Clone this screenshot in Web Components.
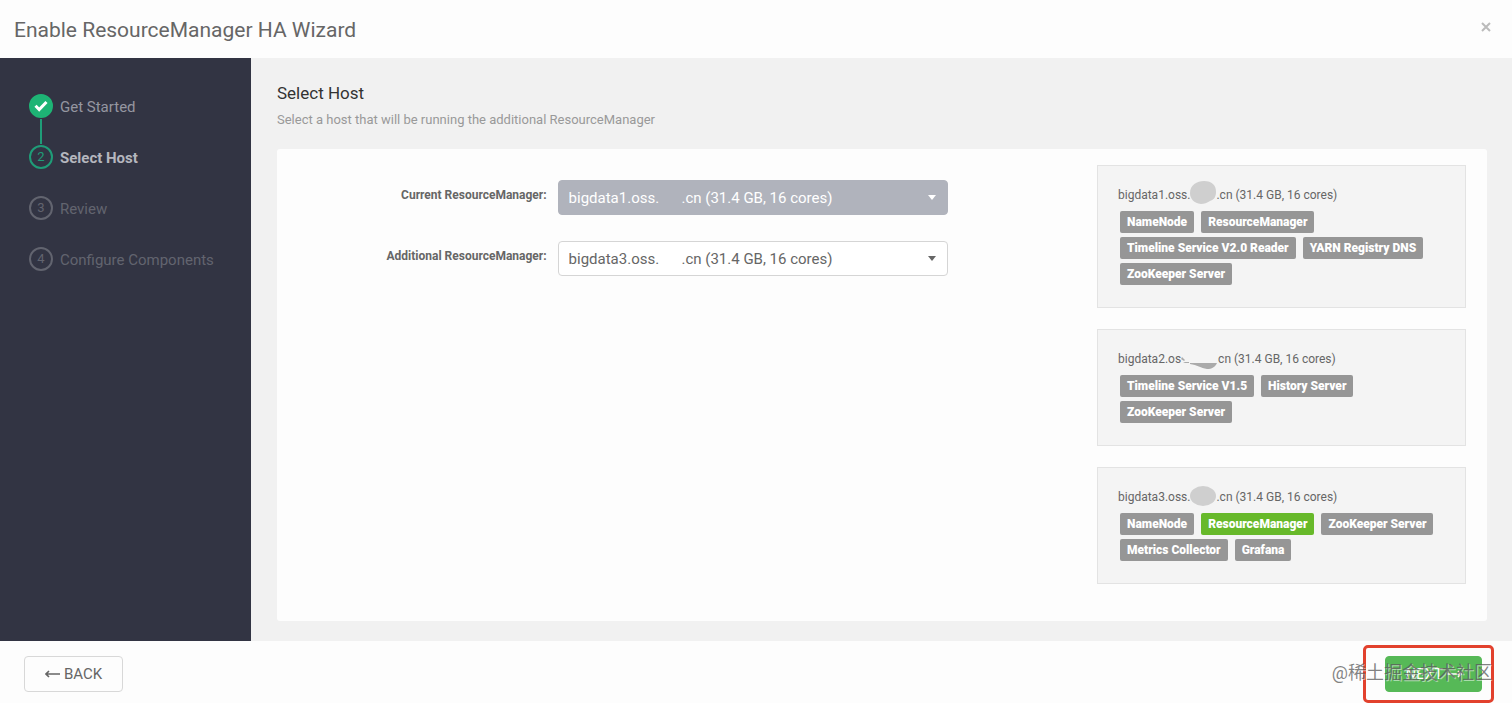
<!DOCTYPE html>
<html lang="en">
<head>
<meta charset="utf-8">
<title>Enable ResourceManager HA Wizard</title>
<style>
    body {
        margin: 0;
        font-family: Roboto, "Noto Sans CJK SC", sans-serif;
        font-size: 15px;
        color: #666;
        background: #fdfdfd;
    }
</style>
</head>
<body>
<ha-wizard>
    <wizard-header slot="header">Enable ResourceManager HA Wizard</wizard-header>

    <wizard-nav slot="nav">
        <wizard-step number="1" state="done">Get Started</wizard-step>
        <wizard-step number="2" state="active">Select Host</wizard-step>
        <wizard-step number="3">Review</wizard-step>
        <wizard-step number="4">Configure Components</wizard-step>
    </wizard-nav>

    <host-select label="Current ResourceManager:" host="bigdata1.oss." slot="form" disabled></host-select>
    <host-select label="Additional ResourceManager:" host="bigdata3.oss." slot="form"></host-select>

    <host-card name="bigdata1.oss." domain=".cn" mask="tall" slot="hosts">
        <service-tag>NameNode</service-tag>
        <service-tag>ResourceManager</service-tag>
        <service-tag>Timeline Service V2.0 Reader</service-tag>
        <service-tag>YARN Registry DNS</service-tag>
        <service-tag>ZooKeeper Server</service-tag>
    </host-card>
    <host-card name="bigdata2.os" domain="cn" mask="flat" slot="hosts">
        <service-tag>Timeline Service V1.5</service-tag>
        <service-tag>History Server</service-tag>
        <service-tag>ZooKeeper Server</service-tag>
    </host-card>
    <host-card name="bigdata3.oss." domain=".cn" mask="round" slot="hosts">
        <service-tag>NameNode</service-tag>
        <service-tag added>ResourceManager</service-tag>
        <service-tag>ZooKeeper Server</service-tag>
        <service-tag>Metrics Collector</service-tag>
        <service-tag>Grafana</service-tag>
    </host-card>

    <wizard-footer slot="footer"></wizard-footer>
</ha-wizard>

<script>
class HaWizard extends HTMLElement {

    constructor() {
        super();
        this.shadowDOM = this.attachShadow({mode: "open"});
    }

    connectedCallback() {
        this.shadowDOM.innerHTML = `
        <style>
        * {
            box-sizing: border-box;
        }
        :host {
            display: flex;
            flex-direction: column;
            min-height: 100vh;
        }
        .body {
            display: flex;
            flex: 1;
        }
        nav {
            width: 251px;
            flex-shrink: 0;
            background: #323443;
        }
        main {
            flex: 1;
            display: flex;
            flex-direction: column;
            padding: 24px 25px 20px 26px;
            background: #f1f1f1;
        }
        h2 {
            margin: 0;
            font-size: 17px;
            line-height: 22px;
            font-weight: normal;
            color: #333;
        }
        p {
            margin: 6px 0 19px;
            font-size: 13px;
            line-height: 20px;
            color: #999;
        }
        .panel {
            flex: 1;
            display: flex;
            gap: 20px;
            padding: 16px 21px 36px 20px;
            background: #fdfdfd;
            border-radius: 3px;
        }
        form {
            flex: 1;
            display: flex;
            flex-direction: column;
            gap: 26px;
            padding-top: 15px;
        }
        .hosts {
            width: 369px;
            display: flex;
            flex-direction: column;
            gap: 21px;
        }
        </style>
        <slot name="header"></slot>
        <div class="body">
            <nav><slot name="nav"></slot></nav>
            <main>
                <h2>Select Host</h2>
                <p>Select a host that will be running the additional ResourceManager</p>
                <div class="panel">
                    <form><slot name="form"></slot></form>
                    <div class="hosts"><slot name="hosts"></slot></div>
                </div>
            </main>
        </div>
        <slot name="footer"></slot>`;
    }
}

class WizardHeader extends HTMLElement {

    constructor() {
        super();
        this.shadowDOM = this.attachShadow({mode: "open"});
    }

    connectedCallback() {
        this.shadowDOM.innerHTML = `
        <style>
        :host {
            display: flex;
            align-items: center;
            justify-content: space-between;
            padding: 16px 20px 14px 14px;
        }
        h1 {
            margin: 0;
            font-size: 21px;
            line-height: 28px;
            font-weight: normal;
        }
        button {
            display: flex;
            margin: 0 0 6px;
            padding: 0;
            border: 0;
            background: none;
            color: #bbb;
        }
        </style>
        <h1><slot></slot></h1>
        <button type="button" aria-label="Close">
            <svg width="12" height="12" viewBox="0 0 12 12" fill="none" stroke="currentColor" stroke-width="2">
                <path d="M2 2l8 8M10 2l-8 8"/>
            </svg>
        </button>`;
    }
}

class WizardNav extends HTMLElement {

    constructor() {
        super();
        this.shadowDOM = this.attachShadow({mode: "open"});
    }

    connectedCallback() {
        this.shadowDOM.innerHTML = `
        <style>
        :host {
            display: flex;
            flex-direction: column;
            padding: 35px 20px 0 29px;
        }
        </style>
        <slot></slot>`;
    }
}

class WizardStep extends HTMLElement {

    constructor() {
        super();
        this.shadowDOM = this.attachShadow({mode: "open"});
    }

    connectedCallback() {
        const done = this.getAttribute("state") === "done";
        const check = `
            <svg width="14" height="12" viewBox="0 0 14 12" fill="none" stroke="#fff" stroke-width="3">
                <path d="M1.5 5.8l3.7 3.7L12.5 2"/>
            </svg>`;
        this.shadowDOM.innerHTML = `
        <style>
        * {
            box-sizing: border-box;
        }
        :host {
            display: block;
            color: #62646f;
        }
        .row {
            display: flex;
            align-items: center;
            gap: 7px;
            line-height: 24px;
        }
        .circle {
            display: flex;
            align-items: center;
            justify-content: center;
            width: 24px;
            height: 24px;
            border: 2px solid #62646f;
            border-radius: 50%;
            font-size: 13px;
        }
        .text {
            padding-top: 2px;
        }
        .line {
            width: 2px;
            height: 25px;
            margin-left: 11px;
        }
        :host([state="done"]) {
            color: #9596a0;
        }
        :host([state="done"]) .circle {
            background: #1eb475;
            border-color: #1eb475;
        }
        :host([state="done"]) .line {
            background: #1f9d78;
        }
        :host([state="active"]) {
            color: #b5b6be;
            font-weight: bold;
        }
        :host([state="active"]) .circle {
            border-color: #1f9d78;
            color: #1f9d78;
            font-weight: normal;
        }
        </style>
        <div class="row">
            <span class="circle">${done ? check : this.getAttribute("number")}</span>
            <span class="text"><slot></slot></span>
        </div>
        <div class="line"></div>`;
    }
}

class HostSelect extends HTMLElement {

    constructor() {
        super();
        this.shadowDOM = this.attachShadow({mode: "open"});
    }

    connectedCallback() {
        const disabled = this.hasAttribute("disabled") ? "disabled" : "";
        this.shadowDOM.innerHTML = `
        <style>
        * {
            box-sizing: border-box;
        }
        :host {
            display: flex;
            gap: 11px;
        }
        label {
            width: 32%;
            padding-top: 6px;
            font-size: 12px;
            line-height: 18px;
            font-weight: bold;
            text-align: right;
            white-space: nowrap;
        }
        .field {
            display: flex;
            align-items: center;
            width: 50%;
            height: 35px;
            padding-right: 10px;
            border: 1px solid #d5d5d5;
            border-radius: 4px;
            background: #fff;
        }
        select {
            flex: 1;
            min-width: 0;
            height: 33px;
            padding: 0 10px;
            border: 0;
            appearance: none;
            background: none;
            font: inherit;
            font-size: 15px;
            color: inherit;
            opacity: 1;
        }
        svg {
            fill: currentColor;
        }
        :host([disabled]) .field {
            border-color: #b0b3bc;
            background: #b0b3bc;
            color: #fff;
        }
        </style>
        <label for="host">${this.getAttribute("label")}</label>
        <div class="field">
            <select id="host" ${disabled}>
                <option>${this.getAttribute("host")}${"&nbsp;".repeat(6)}.cn (31.4 GB, 16 cores)</option>
            </select>
            <svg width="10" height="5" viewBox="0 0 10 5"><path d="M1 0h8L5 5z"/></svg>
        </div>`;
    }
}

// shapes painted over the private part of a host name
const masks = {
    tall: `<svg width="26" height="30" viewBox="1 0 26 30">
        <path fill="#cfcfcf" d="M1 13C1 5 8 1 15 1c8 0 12 4 12 11 0 6-3 8-6 9-3 2-6 3-9 3C5 23 1 19 1 13z"/>
    </svg>`,
    round: `<svg width="26" height="30" viewBox="1 -2 26 30">
        <ellipse cx="14" cy="12" rx="13" ry="10" fill="#cfcfcf"/>
    </svg>`,
    flat: `<svg width="37" height="30" viewBox="0 0 37 30" fill="#aaa">
        <path d="M1 13l3 3-1 1-3-2zM2 18h6v1H4z"/>
        <path d="M9 19h27c-2 4-5 6-10 6-6-1-10-4-17-5z"/>
    </svg>`
};

class HostCard extends HTMLElement {

    constructor() {
        super();
        this.shadowDOM = this.attachShadow({mode: "open"});
    }

    connectedCallback() {
        this.shadowDOM.innerHTML = `
        <style>
        :host {
            display: block;
            padding: 20px 20px 22px;
            border: 1px solid #e3e3e3;
            background: #f4f4f4;
        }
        .name {
            display: flex;
            align-items: center;
            height: 18px;
            margin-bottom: 7px;
            font-size: 12px;
            white-space: nowrap;
        }
        .tags {
            display: flex;
            flex-wrap: wrap;
            gap: 4px 7px;
            padding-left: 2px;
        }
        </style>
        <div class="name">
            <span>${this.getAttribute("name")}</span>
            ${masks[this.getAttribute("mask")]}
            <span>${this.getAttribute("domain")} (31.4 GB, 16 cores)</span>
        </div>
        <div class="tags"><slot></slot></div>`;
    }
}

class ServiceTag extends HTMLElement {

    constructor() {
        super();
        this.shadowDOM = this.attachShadow({mode: "open"});
    }

    connectedCallback() {
        this.shadowDOM.innerHTML = `
        <style>
        :host {
            display: block;
            padding: 0 7px;
            border-radius: 2px;
            background: #969696;
            color: #fff;
            font-size: 12px;
            line-height: 22px;
            font-weight: 900;
        }
        :host([added]) {
            background: #67b92a;
        }
        </style>
        <slot></slot>`;
    }
}

class WizardFooter extends HTMLElement {

    constructor() {
        super();
        this.shadowDOM = this.attachShadow({mode: "open"});
    }

    connectedCallback() {
        this.shadowDOM.innerHTML = `
        <style>
        * {
            box-sizing: border-box;
        }
        :host {
            position: relative;
            display: flex;
            justify-content: space-between;
            padding: 15px 30px 11px 24px;
        }
        button {
            display: flex;
            align-items: center;
            justify-content: center;
            gap: 4px;
            height: 36px;
            padding: 0 20px;
            border: 1px solid #d8d8d8;
            border-radius: 4px;
            background: #fdfdfd;
            font: inherit;
            font-size: 15px;
            color: #666;
        }
        button.next {
            padding: 0 19px;
            border-color: #56b957;
            background: #56b957;
            color: #fff;
        }
        svg {
            fill: none;
            stroke: currentColor;
            stroke-width: 1.6;
        }
        .frame {
            position: absolute;
            right: 18px;
            top: 4px;
            width: 131px;
            bottom: 0;
            border: 3px solid #e2412d;
            border-radius: 5px;
            pointer-events: none;
        }
        .mark {
            position: absolute;
            right: 20px;
            top: 18px;
            font-size: 18px;
            line-height: 28px;
            white-space: nowrap;
            color: rgba(90, 90, 90, 0.75);
            text-shadow: 1px 1px 0 rgba(255, 255, 255, 0.5);
            pointer-events: none;
        }
        </style>
        <button type="button">
            <svg width="15" height="8" viewBox="0 0 15 8"><path d="M15 4H1M4 1L1 4l3 3"/></svg>
            BACK
        </button>
        <button type="button" class="next">
            NEXT
            <svg width="15" height="8" viewBox="0 0 15 8"><path d="M0 4h14M11 1l3 3-3 3"/></svg>
        </button>
        <div class="frame"></div>
        <div class="mark">@稀土掘金技术社区</div>`;
    }
}

customElements.define("ha-wizard", HaWizard);
customElements.define("wizard-header", WizardHeader);
customElements.define("wizard-nav", WizardNav);
customElements.define("wizard-step", WizardStep);
customElements.define("host-select", HostSelect);
customElements.define("host-card", HostCard);
customElements.define("service-tag", ServiceTag);
customElements.define("wizard-footer", WizardFooter);
</script>
</body>
</html>
